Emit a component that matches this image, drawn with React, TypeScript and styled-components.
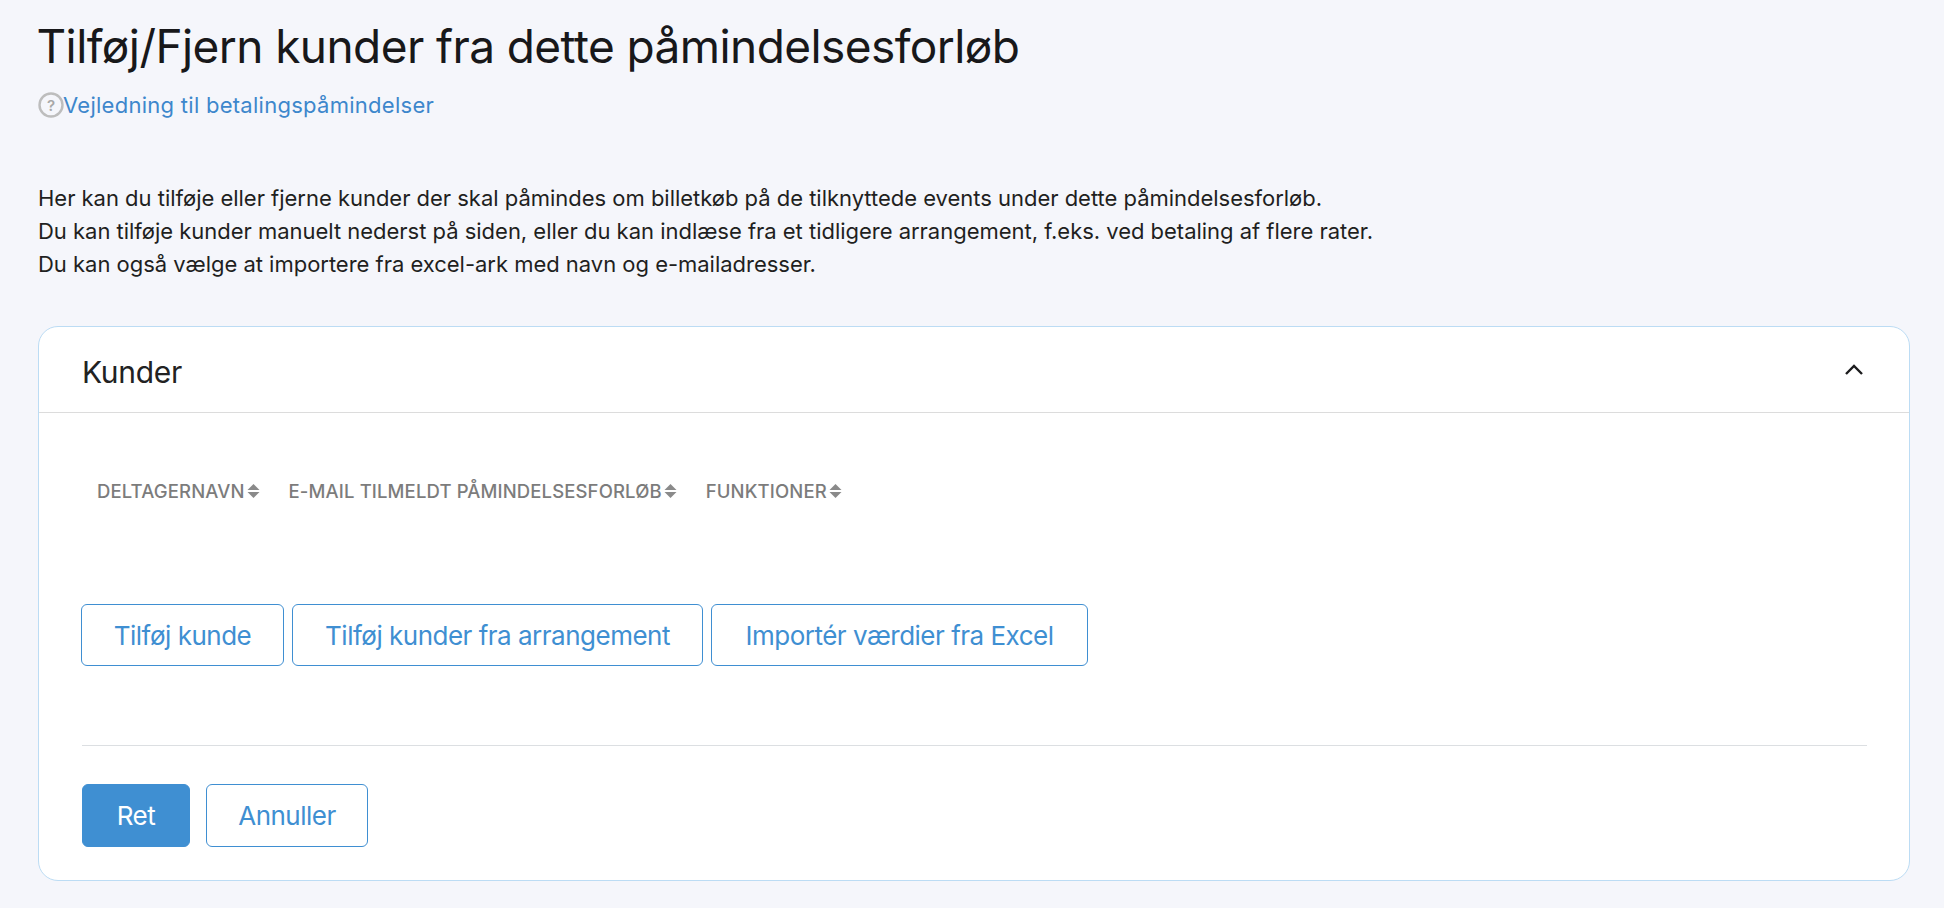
import React from "react";
import styled, { createGlobalStyle } from "styled-components";

const Global = createGlobalStyle`
  html, body { margin: 0; padding: 0; background: #f5f6fb; }
  body { font-family: Inter, "Noto Sans", sans-serif; color: #1c1c1e; }
`;

const Page = styled.div`
  height: 908px;
  box-sizing: border-box;
  padding: 16px 34px 27px 38px;
  display: flex;
  flex-direction: column;
  overflow: hidden;
`;

const Title = styled.h1`
  margin: 0 0 0 -1.5px;
  font-size: 46px;
  line-height: 60px;
  font-weight: 400;
  letter-spacing: -0.58px;
  color: #18181a;
  white-space: nowrap;
`;

const HelpRow = styled.div`
  display: flex;
  align-items: center;
  margin-top: 14px;
  height: 30px;
`;

const HelpLink = styled.a`
  font-size: 22px;
  letter-spacing: 0.27px;
  margin-left: -1px;
  color: #3d87cc;
  white-space: nowrap;
`;

const Intro = styled.p`
  margin: 62px 0 0;
  font-size: 22px;
  line-height: 33px;
  letter-spacing: -0.02px;
  color: #1f1f21;
  white-space: nowrap;
`;

const Card = styled.section`
  margin-top: 45px;
  flex: 1;
  background: #fff;
  border: 1.5px solid #bcdcf4;
  border-radius: 20px;
  display: flex;
  flex-direction: column;
`;

const CardHeader = styled.header`
  height: 86px;
  flex: none;
  box-sizing: border-box;
  border-bottom: 1px solid #dcdcdc;
  padding: 0 46px 0 43px;
  display: flex;
  align-items: center;
  justify-content: space-between;
`;

const CardTitle = styled.h2`
  margin: 5px 0 0;
  font-size: 30px;
  font-weight: 400;
  letter-spacing: -0.3px;
  color: #222;
`;

const CardBody = styled.div`
  padding: 0 42px 0 43px;
  display: flex;
  flex-direction: column;
`;

const TableHead = styled.div`
  display: flex;
  margin-top: 66px;
  padding-left: 15px;
  gap: 29px;
  height: 24px;
  align-items: center;
`;

const HeadCell = styled.div`
  display: flex;
  align-items: center;
  gap: 2px;
  font-size: 18.5px;
  font-weight: 500;
  letter-spacing: 0.13px;
  color: #7c7c7c;
  white-space: nowrap;
`;

const ButtonRow = styled.div`
  display: flex;
  gap: 8px;
  margin-top: 101px;
  margin-left: -1px;
`;

const Button = styled.button<{ $w: number; $h?: number; $primary?: boolean }>`
  width: ${(p) => p.$w}px;
  height: ${(p) => p.$h ?? 62}px;
  box-sizing: border-box;
  padding: 0;
  border-radius: 6px;
  border: 1px solid #3f8fd2;
  background: ${(p) => (p.$primary ? "#3f8fd2" : "#fff")};
  color: ${(p) => (p.$primary ? "#fff" : "#3f8fd2")};
  font-family: inherit;
  font-size: 26px;
  letter-spacing: -0.5px;
  white-space: nowrap;
`;

const Divider = styled.hr`
  margin: 79px 0 0;
  border: 0;
  border-top: 1px solid #dcdfe2;
`;

const Actions = styled.div`
  display: flex;
  gap: 16px;
  margin-top: 38px;
`;

const Help = () => (
  <svg width="26" height="26" viewBox="0 0 26 26" fill="none">
    <circle cx="13" cy="13" r="11.5" stroke="#bdbdbd" strokeWidth="2.4" />
    <text x="13" y="18.5" textAnchor="middle" fontSize="15" fontWeight="600" fontFamily="Inter, sans-serif" fill="#a8a8a8">?</text>
  </svg>
);

const Chevron = () => (
  <svg width="18" height="11" viewBox="0 0 18 11" fill="none">
    <path d="M1 10 L9 2 L17 10" stroke="#1c1c1e" strokeWidth="2.4" />
  </svg>
);

const Sort = () => (
  <svg width="13" height="16" viewBox="0 0 13 16" fill="#8a8a8a">
    <path d="M6.5 1 L12.5 7 H0.5 Z" />
    <path d="M6.5 15 L12.5 9 H0.5 Z" />
  </svg>
);

export default function App() {
  return (
    <Page>
      <Global />
      <Title>Tilføj/Fjern kunder fra dette påmindelsesforløb</Title>
      <HelpRow>
        <Help />
        <HelpLink>Vejledning til betalingspåmindelser</HelpLink>
      </HelpRow>
      <Intro>
        Her kan du tilføje eller fjerne kunder der skal påmindes om billetkøb på de tilknyttede events under dette påmindelsesforløb.
        <br />
        Du kan tilføje kunder manuelt nederst på siden, eller du kan indlæse fra et tidligere arrangement, f.eks. ved betaling af flere rater.
        <br />
        Du kan også vælge at importere fra excel-ark med navn og e-mailadresser.
      </Intro>
      <Card>
        <CardHeader>
          <CardTitle>Kunder</CardTitle>
          <Chevron />
        </CardHeader>
        <CardBody>
          <TableHead>
            <HeadCell>DELTAGERNAVN<Sort /></HeadCell>
            <HeadCell>E-MAIL TILMELDT PÅMINDELSESFORLØB<Sort /></HeadCell>
            <HeadCell>FUNKTIONER<Sort /></HeadCell>
          </TableHead>
          <ButtonRow>
            <Button $w={203}>Tilføj kunde</Button>
            <Button $w={411}>Tilføj kunder fra arrangement</Button>
            <Button $w={377}>Importér værdier fra Excel</Button>
          </ButtonRow>
          <Divider />
          <Actions>
            <Button $w={108} $h={63} $primary>Ret</Button>
            <Button $w={162} $h={63}>Annuller</Button>
          </Actions>
        </CardBody>
      </Card>
    </Page>
  );
}
